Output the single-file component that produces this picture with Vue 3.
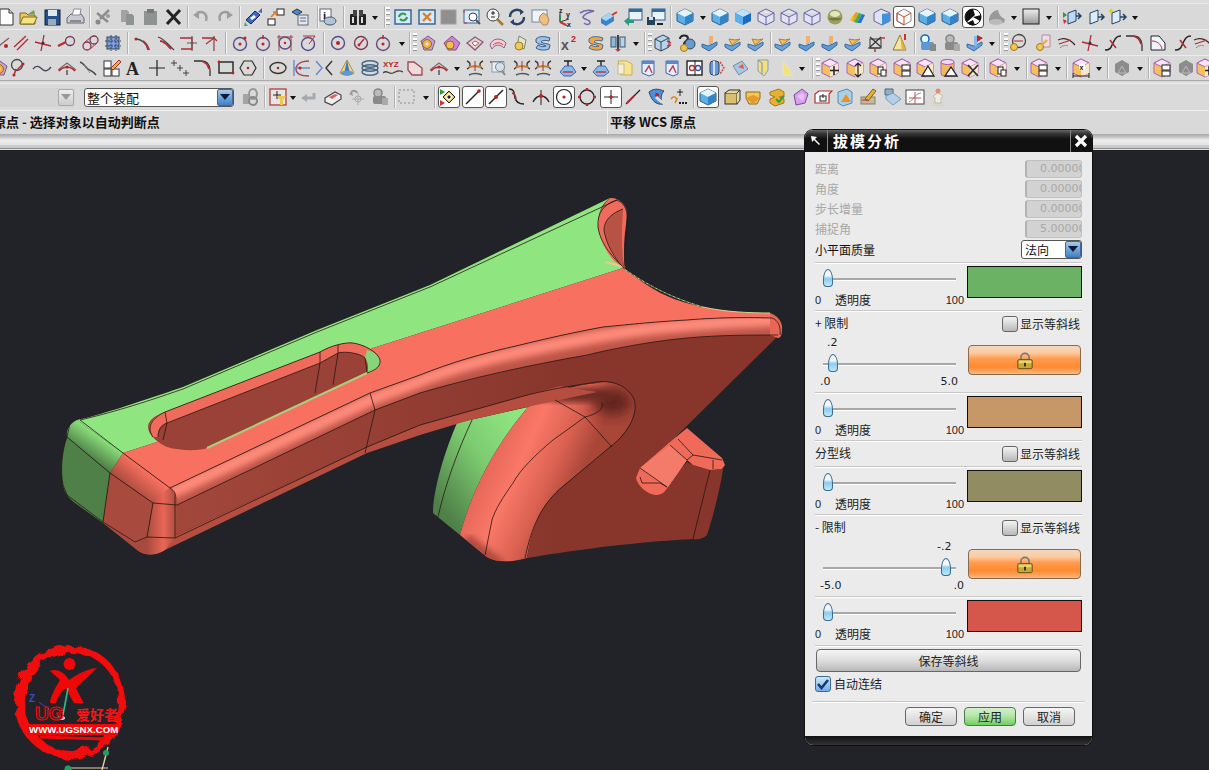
<script setup>
import { computed } from 'vue'

const toolRows = [
  [[6,'new'],[28,'open'],[52,'save'],[75,'print'],[90,'sep'],[103,'cut'],[127,'copy'],[150,'paste'],[173,'del'],[188,'sep'],[201,'undo'],[225,'redo'],[240,'sep'],[254,'wcsedit'],[276,'layers'],[300,'props'],[318,'sep'],[328,'info'],[344,'sep'],[358,'binoc'],[375,'caret'],[385,'sep'],[388,'grip'],[403,'refresh'],[427,'fit'],[449,'graysq'],[472,'zoomwin'],[495,'zoom'],[517,'rotate'],[541,'pan'],[563,'axes'],[587,'curvep'],[609,'cubearrow'],[633,'winA'],[656,'winB'],[671,'sep'],[685,'cube'],[703,'caret'],[720,'cube'],[743,'cubeD'],[766,'wire'],[789,'wire'],[812,'wire'],[835,'sphere'],[858,'rainbow'],[882,'wirefill'],[904,'cubeO',1],[927,'cube'],[950,'cube'],[973,'discbw',1],[997,'grayshape'],[1014,'caret'],[1031,'gradsq'],[1049,'caret'],[1058,'sep'],[1072,'doorG'],[1096,'door'],[1118,'doorY'],[1135,'caret']],
  [[2,'lnX'],[21,'lnA'],[43,'lnB'],[67,'lnC'],[90,'lnD'],[113,'net'],[128,'sep'],[143,'arcA'],[166,'arcB'],[188,'trimA'],[210,'trimB'],[226,'sep'],[240,'cirA'],[263,'cirB'],[285,'cirC'],[308,'cirD'],[324,'sep'],[338,'cir1'],[361,'cir2'],[383,'cirB'],[402,'caret'],[410,'sep'],[415,'grip'],[428,'gearO'],[452,'gearP'],[475,'surfA'],[498,'surfB'],[521,'gearY'],[543,'surfy'],[559,'sep'],[570,'x2'],[596,'surfyO'],[618,'pin'],[636,'caret'],[645,'sep'],[650,'grip'],[663,'cubeRed'],[687,'gearQ'],[710,'basin'],[733,'basinO'],[756,'basinO'],[771,'sep'],[783,'basinO'],[807,'basin'],[830,'basin'],[853,'basinO'],[876,'xbox'],[900,'bell'],[915,'sep'],[928,'blueK'],[952,'grayK'],[975,'basinR'],[992,'caret'],[1000,'sep'],[1006,'grip'],[1018,'gearL'],[1043,'keyDoc'],[1067,'arcThin'],[1090,'lnB'],[1113,'sCurve'],[1135,'trimC'],[1158,'docArc'],[1183,'sCurve'],[1203,'arcThin']],
  [[0,'gearO'],[18,'pinC'],[42,'wave'],[67,'spline'],[88,'spline2'],[112,'gridPen'],[133,'textA'],[157,'plus'],[180,'plusses'],[203,'trimC'],[226,'rect'],[248,'hex'],[264,'sep'],[278,'ellipse'],[302,'para'],[324,'hyper'],[347,'cone'],[370,'coil'],[393,'xyz'],[415,'house'],[439,'spline'],[457,'caret'],[475,'ss1'],[498,'ss2'],[522,'ss1'],[543,'ss1'],[568,'plate'],[584,'caret'],[601,'plate'],[625,'folderY'],[648,'sheetB'],[672,'sheetB'],[695,'mirror'],[717,'cylArrow'],[740,'tiltSq'],[763,'flagY'],[787,'wedgeY'],[802,'caret'],[813,'sep'],[818,'grip'],[830,'cpPlus'],[855,'cpArrow'],[878,'cpDoc'],[902,'cpGrid'],[925,'cpTri'],[948,'cylTri'],[970,'cpX'],[985,'sep'],[998,'cpDoc'],[1017,'caret'],[1027,'sep'],[1039,'cpGrid'],[1058,'caret'],[1067,'sep'],[1081,'cpDim'],[1099,'caret'],[1108,'sep'],[1122,'grayHex'],[1140,'caret'],[1149,'sep'],[1162,'cpGrid'],[1186,'grayHex'],[1205,'cpPlus']],
  [[37,'combo1'],[159,'combo2'],[250,'grayLink'],[265,'sep'],[278,'filter'],[293,'caret'],[308,'grayArrow'],[333,'box3d'],[357,'grayCross'],[380,'grayK'],[395,'sep'],[407,'dashRect'],[426,'caret'],[435,'sep'],[449,'snapGrid',1],[473,'snapLine',1],[496,'snapMid',1],[517,'snapCurve'],[541,'snapT'],[564,'snapCenter',1],[587,'snapQuad'],[611,'snapPlus',1],[633,'snapPt'],[656,'snapSurf'],[679,'snapMore'],[694,'sep'],[708,'cube',1],[732,'boxY'],[753,'boxO'],[777,'boxG'],[800,'boxV'],[823,'frameR'],[845,'cubeOr'],[868,'pencilBox'],[892,'flagB'],[915,'chart'],[938,'manG']],
]

const widths = { sep: 2, caret: 8, grip: 4, combo1: 76, combo2: 150 }

// every item sits at the centre x read off the toolbar
const rows = computed(() => toolRows.map((row) => {
  let right = 0
  return row.map(([x, kind, active]) => {
    const w = widths[kind] || 22
    const item = { kind, active, w, ml: x - w / 2 - right }
    right = x + w / 2
    return item
  })
}))

const fields = [
  { label: '距离', value: '0.00000' },
  { label: '角度', value: '0.00000' },
  { label: '步长增量', value: '0.00000' },
  { label: '捕捉角', value: '5.00000' },
]
</script>

<template>
  <div class="page">
    <svg class="defs" width="0" height="0">
      <defs>
        <linearGradient id="gSteel" x1="0" y1="0" x2="0" y2="1"><stop offset="0" stop-color="#eee"/><stop offset="1" stop-color="#999"/></linearGradient>
        <linearGradient id="gGreenBody" x1="1" y1="0" x2="0" y2="1"><stop offset="0.1" stop-color="#8fe680"/><stop offset="0.45" stop-color="#7ccb70"/><stop offset="0.85" stop-color="#4f8048"/></linearGradient>
        <linearGradient id="gRedBody" gradientUnits="userSpaceOnUse" x1="470" y1="455" x2="570" y2="500"><stop offset="0" stop-color="#d85d4f"/><stop offset="0.45" stop-color="#fa7868"/><stop offset="0.75" stop-color="#d96050"/><stop offset="1" stop-color="#a84638"/></linearGradient>
        <linearGradient id="gFace" gradientUnits="userSpaceOnUse" x1="170" y1="0" x2="560" y2="0"><stop offset="0" stop-color="#a3473b"/><stop offset="0.6" stop-color="#943e33"/><stop offset="1" stop-color="#88362c"/></linearGradient>
        <linearGradient id="gEndGreen" gradientUnits="userSpaceOnUse" x1="102" y1="436" x2="88" y2="456"><stop offset="0" stop-color="#8fe680"/><stop offset="1" stop-color="#4f8048"/></linearGradient>
        <linearGradient id="gEndRed" gradientUnits="userSpaceOnUse" x1="146" y1="471" x2="130" y2="490"><stop offset="0" stop-color="#f87060"/><stop offset="1" stop-color="#a84b3e"/></linearGradient>
        <linearGradient id="gCorner" gradientUnits="userSpaceOnUse" x1="147" y1="0" x2="177" y2="0"><stop offset="0" stop-color="#a84b3e"/><stop offset="0.55" stop-color="#e86656"/><stop offset="1" stop-color="#a84b3e"/></linearGradient>

        <symbol id="new" viewBox="0 0 20 20"><path d="M4 2h9l4 4v12H4z" fill="#fff" stroke="#333"/><path d="M13 2v4h4" fill="#cde" stroke="#333"/></symbol>
        <symbol id="open" viewBox="0 0 20 20"><path d="M2 6h6l2 2h7v9H2z" fill="#e8c85a" stroke="#7a6a20"/><path d="M2 17l3-7h14l-3 7z" fill="#f6e27e" stroke="#7a6a20"/><path d="M10 7l6-4 1 4z" fill="#5cb04a"/></symbol>
        <symbol id="save" viewBox="0 0 20 20"><rect x="3" y="3" width="15" height="15" fill="#24508c" stroke="#123"/><rect x="6" y="3" width="9" height="6" fill="#dfe8f0"/><rect x="6" y="12" width="8" height="6" fill="#9ab"/></symbol>
        <symbol id="print" viewBox="0 0 20 20"><path d="M2 11l4-4h10l3 4v5H2z" fill="#c8ccd0" stroke="#667"/><path d="M7 8l2-6h7l-1 6z" fill="#fff" stroke="#889"/><rect x="5" y="13" width="11" height="2" fill="#889"/></symbol>
        <symbol id="cut" viewBox="0 0 20 20"><path d="M16 3L7 12M4 6l11 9" stroke="#8a8e8c" stroke-width="2.500" fill="none"/><circle cx="5" cy="15" r="2.500" fill="#888"/><circle cx="15" cy="9" r="2" fill="#999"/></symbol>
        <symbol id="copy" viewBox="0 0 20 20"><path d="M4 3h6l2 2v10H4z" fill="#a0a4a2"/><path d="M9 7h6l2 2v9H9z" fill="#8e9290"/></symbol>
        <symbol id="paste" viewBox="0 0 20 20"><rect x="4" y="4" width="13" height="14" fill="#8e9290"/><rect x="7" y="2" width="7" height="4" fill="#777"/></symbol>
        <symbol id="del" viewBox="0 0 20 20"><path d="M4 3l13 14M17 3L4 17" stroke="#222" stroke-width="3" fill="none"/></symbol>
        <symbol id="undo" viewBox="0 0 20 20"><path d="M6 6c6-3 11 1 9 8" stroke="#9a9e9c" stroke-width="2.500" fill="none"/><path d="M2 8l6-4v8z" fill="#9a9e9c"/></symbol>
        <symbol id="redo" viewBox="0 0 20 20"><path d="M14 6C8 3 3 7 5 14" stroke="#9a9e9c" stroke-width="2.500" fill="none"/><path d="M18 8l-6-4v8z" fill="#9a9e9c"/></symbol>
        <symbol id="wcsedit" viewBox="0 0 20 20"><path d="M2 13l9-9 5 4-9 9z" fill="#3a6cc4" stroke="#224"/><path d="M6 11l4-3 2 2-4 3z" fill="#fff"/><path d="M14 5l4-4v5z" fill="#3a6cc4"/><path d="M1 15l3 4-4 0z" fill="#4a7"/></symbol>
        <symbol id="layers" viewBox="0 0 20 20"><rect x="11" y="2" width="7" height="6" fill="#fff" stroke="#222"/><rect x="2" y="12" width="7" height="6" fill="#fff" stroke="#222"/><path d="M5 10l4-4M7 5h3v3" stroke="#e07a20" stroke-width="1.600" fill="none"/></symbol>
        <symbol id="props" viewBox="0 0 20 20"><path d="M2 5l5-3 5 3-5 3z" fill="#4a8ad0" stroke="#333"/><rect x="8" y="8" width="10" height="10" fill="#dfe8f0" stroke="#667"/><path d="M10 11h6M10 14h6" stroke="#667"/></symbol>
        <symbol id="info" viewBox="0 0 20 20"><rect x="2" y="2" width="11" height="12" fill="#fff" stroke="#667"/><text x="5" y="12" font-size="11" font-weight="700" fill="#114" font-family="Liberation Serif">i</text><ellipse cx="12" cy="14" rx="6" ry="4" fill="#b4c4d8" stroke="#456"/></symbol>
        <symbol id="binoc" viewBox="0 0 20 20"><rect x="2" y="7" width="7" height="11" rx="1" fill="#222"/><rect x="11" y="7" width="7" height="11" rx="1" fill="#222"/><rect x="5" y="3" width="4" height="6" fill="#444"/><rect x="11" y="3" width="4" height="6" fill="#444"/><rect x="4" y="10" width="2" height="6" fill="#ddd"/><rect x="13" y="10" width="2" height="6" fill="#ddd"/></symbol>
        <symbol id="refresh" viewBox="0 0 20 20"><rect x="2" y="3" width="16" height="14" fill="#d8e8f4" stroke="#34689c" stroke-width="1.500"/><path d="M6 10a4 4 0 0 1 7-2M14 10a4 4 0 0 1-7 2" stroke="#2c9a50" stroke-width="2" fill="none"/></symbol>
        <symbol id="fit" viewBox="0 0 20 20"><rect x="2" y="3" width="16" height="14" fill="#d8e8f4" stroke="#34689c" stroke-width="1.500"/><path d="M6 6l8 8M14 6l-8 8" stroke="#d88030" stroke-width="2.400"/></symbol>
        <symbol id="graysq" viewBox="0 0 20 20"><rect x="2" y="3" width="15" height="14" fill="#8f8f8f" stroke="#a0a0a0"/></symbol>
        <symbol id="zoomwin" viewBox="0 0 20 20"><rect x="2" y="3" width="15" height="13" fill="#dfeaf4" stroke="#34689c"/><circle cx="11" cy="10" r="4" fill="#fff" stroke="#345"/><path d="M14 13l4 4" stroke="#555" stroke-width="2"/><path d="M2 16h3M2 3v3" stroke="#c33"/></symbol>
        <symbol id="zoom" viewBox="0 0 20 20"><circle cx="8" cy="8" r="6" fill="#f0f4f8" stroke="#444"/><path d="M6 6h4M8 4v4M6 10h4" stroke="#222"/><path d="M12 12l6 6" stroke="#a87830" stroke-width="2.500"/></symbol>
        <symbol id="rotate" viewBox="0 0 20 20"><path d="M3 10a7 7 0 0 1 12-5M17 10a7 7 0 0 1-12 5" stroke="#2a4468" stroke-width="2.400" fill="none"/><path d="M13 2l4 3-4 3zM7 18l-4-3 4-3z" fill="#2a4468"/></symbol>
        <symbol id="pan" viewBox="0 0 20 20"><rect x="1" y="3" width="15" height="12" fill="#eef4fa" stroke="#789"/><path d="M9 9l3-3 4 2 2 5-2 5h-4l-4-5z" fill="#f0c080" stroke="#a86"/></symbol>
        <symbol id="axes" viewBox="0 0 20 20"><path d="M7 15V6M7 15l9-3M7 15l8 4" stroke="#333" fill="none"/><path d="M7 15V8" stroke="#2a9050" stroke-width="2"/><path d="M7 15l6 3" stroke="#c33" stroke-width="2"/><text x="6" y="6" font-size="7" font-weight="700" fill="#223" font-family="Liberation Sans">z</text><text x="13" y="10" font-size="7" font-weight="700" fill="#223" font-family="Liberation Sans">y</text><text x="14" y="20" font-size="7" font-weight="700" fill="#223" font-family="Liberation Sans">x</text></symbol>
        <symbol id="curvep" viewBox="0 0 20 20"><path d="M3 6c4-3 10-3 14-2-4 1-10 3-11 6 0 3 8 2 7 6-1 2-4 2-6 0" stroke="#7868a8" stroke-width="1.600" fill="none"/></symbol>
        <symbol id="cubearrow" viewBox="0 0 20 20"><path d="M2 11l8-5 5 3v5l-8 5-5-3z" fill="#3a84cc"/><path d="M2 11l8-5 5 3-8 5z" fill="#a8d4f0"/><path d="M13 8l5-3" stroke="#c33" stroke-width="2"/></symbol>
        <symbol id="winA" viewBox="0 0 20 20"><rect x="6" y="2" width="13" height="11" fill="#eaf2fa" stroke="#2c5c8c"/><rect x="6" y="2" width="13" height="3" fill="#2c6ca8"/><path d="M1 14l5-4v3h5v3H6v3z" fill="#2c9a80"/></symbol>
        <symbol id="winB" viewBox="0 0 20 20"><rect x="6" y="2" width="13" height="11" fill="#eaf2fa" stroke="#2c5c8c"/><rect x="6" y="2" width="13" height="3" fill="#2c6ca8"/><rect x="1" y="10" width="8" height="8" fill="#245" /><rect x="3" y="10" width="4" height="3" fill="#dde"/><path d="M11 17h6" stroke="#222" stroke-width="2"/></symbol>
        <symbol id="cube" viewBox="0 0 20 20"><path d="M10 2l8 4v8l-8 4-8-4V6z" fill="#5ab0e8" stroke="#345a80"/><path d="M2 6l8 4 8-4-8-4z" fill="#e4f4fc"/><path d="M10 10v8l8-4V6z" fill="#3484c8"/></symbol>
        <symbol id="cubeD" viewBox="0 0 20 20"><path d="M10 2l8 4v8l-8 4-8-4V6z" fill="#1a6cc0"/><path d="M2 6l8 4 8-4-8-4z" fill="#bfe2fa"/><path d="M10 10v8L2 14V6z" fill="#5ab0ec"/></symbol>
        <symbol id="wire" viewBox="0 0 20 20"><path d="M10 2l8 4v8l-8 4-8-4V6zM2 6l8 4 8-4M10 10v8" fill="#dfe4f4" stroke="#6a60a0"/></symbol>
        <symbol id="sphere" viewBox="0 0 20 20"><circle cx="10" cy="10" r="7.500" fill="#9aa060"/><ellipse cx="10" cy="7" rx="5" ry="3" fill="#e4e6c0"/><path d="M3 11a7.500 4 0 0 0 14 0" fill="#70783c"/></symbol>
        <symbol id="rainbow" viewBox="0 0 20 20"><path d="M2 13L8 5l3 1-5 9z" fill="#e8a020"/><path d="M6 15l5-9 3 1-5 9z" fill="#3cb050"/><path d="M9 16l5-9 3 1-4 8z" fill="#2c70d0"/><path d="M2 13l2-4 2 1-2 4z" fill="#e8d020"/></symbol>
        <symbol id="wirefill" viewBox="0 0 20 20"><path d="M9 2l9 4v8l-8 4-8-4V6z" fill="#dfe4f4" stroke="#6a60a0"/><path d="M10 7l8-1v8l-8 4z" fill="#3f92dc"/></symbol>
        <symbol id="cubeO" viewBox="0 0 20 20"><path d="M10 2l7 4v8l-7 4-7-4V6z" fill="#fbfbfb" stroke="#8a8a8a"/><path d="M3 6l7 4 7-4M10 10v8" stroke="#c0502c" fill="none"/><path d="M3 6v8l7 4" stroke="#c0502c" fill="none"/></symbol>
        <symbol id="discbw" viewBox="0 0 20 20"><circle cx="10" cy="10" r="8" fill="#fff" stroke="#111"/><path d="M10 2a8 8 0 0 0-6 13l8-7zM10 10l7 4a8 8 0 0 0 1-6z" fill="#111"/><path d="M4 16l6-3 2 5a8 8 0 0 1-8-2z" fill="#111"/></symbol>
        <symbol id="grayshape" viewBox="0 0 20 20"><path d="M2 14c0-7 5-11 9-11 1 4 2 7 7 9l-1 4H3z" fill="#999"/><ellipse cx="9" cy="15" rx="7" ry="3" fill="#bbb"/></symbol>
        <symbol id="gradsq" viewBox="0 0 20 20"><rect x="2" y="2" width="16" height="15" fill="url(#gSteel)" stroke="#222"/></symbol>
        <symbol id="doorG" viewBox="0 0 20 20"><path d="M6 6l8-3v11l-8 3z" fill="#bcd8f4" stroke="#246"/><path d="M14 9h5M16 6l3 3-3 3" stroke="#246" stroke-width="1.500" fill="none"/><path d="M1 5l4 3-4 3z" fill="#2a9a40"/><path d="M1 12l4 2-3 3z" fill="#c33"/></symbol>
        <symbol id="door" viewBox="0 0 20 20"><path d="M4 6l8-3v11l-8 3z" fill="#dcecfa" stroke="#246"/><path d="M12 10h6M15 7l3 3-3 3" stroke="#246" stroke-width="1.500" fill="none"/></symbol>
        <symbol id="doorY" viewBox="0 0 20 20"><path d="M4 6l8-3v11l-8 3z" fill="#dcecfa" stroke="#246"/><path d="M12 10h6M15 7l3 3-3 3" stroke="#246" stroke-width="1.500" fill="none"/><path d="M3 1l1 2 2 1-2 1-1 2-1-2-2-1 2-1z" fill="#d8d020"/></symbol>

        <symbol id="lnX" viewBox="0 0 20 20"><path d="M3 16L17 5" stroke="#8a5a70" stroke-width="1.400"/><circle cx="14" cy="13" r="2" fill="#b22"/></symbol>
        <symbol id="lnA" viewBox="0 0 20 20"><path d="M3 14L15 3M6 17L17 6" stroke="#b22a34" stroke-width="1.400"/></symbol>
        <symbol id="lnB" viewBox="0 0 20 20"><path d="M2 9l16 4M11 2L8 18" stroke="#b22a34" stroke-width="1.300"/><circle cx="10" cy="10" r="1.500" fill="#333"/></symbol>
        <symbol id="lnC" viewBox="0 0 20 20"><circle cx="13" cy="8" r="4.500" fill="none" stroke="#7a3a58" stroke-width="1.300"/><path d="M1 13l8-4" stroke="#b22a34" stroke-width="2"/></symbol>
        <symbol id="lnD" viewBox="0 0 20 20"><circle cx="7" cy="13" r="4" fill="none" stroke="#7a3a58" stroke-width="1.300"/><circle cx="14" cy="7" r="4" fill="none" stroke="#7a3a58" stroke-width="1.300"/><path d="M4 10l7-6M10 16l7-6" stroke="#b22a34"/></symbol>
        <symbol id="net" viewBox="0 0 20 20"><rect x="4" y="4" width="12" height="12" fill="#7c9ce0" stroke="#345"/><path d="M8 2v16M13 2v16M2 8h16M2 13h16" stroke="#345" stroke-dasharray="2 1"/></symbol>
        <symbol id="arcA" viewBox="0 0 20 20"><path d="M2 6c7 0 12 5 13 11" stroke="#444" stroke-width="1.300" fill="none"/><path d="M10 8c3 2 5 6 6 9" stroke="#b22a34" stroke-width="2" fill="none"/><circle cx="3" cy="6" r="1.500" fill="#b22"/></symbol>
        <symbol id="arcB" viewBox="0 0 20 20"><path d="M2 4c7 2 10 8 16 13" stroke="#444" stroke-width="1.300" fill="none"/><path d="M4 8c5 0 8 5 11 8" stroke="#b22a34" stroke-width="2" fill="none"/></symbol>
        <symbol id="trimA" viewBox="0 0 20 20"><path d="M2 5h12v11H3" stroke="#b22a34" stroke-width="1.300" fill="none"/><path d="M9 10h10M14 3v15" stroke="#555"/></symbol>
        <symbol id="trimB" viewBox="0 0 20 20"><path d="M2 5h12l3 3" stroke="#b22a34" stroke-width="1.300" fill="none"/><path d="M14 3v15M6 11l8-6" stroke="#8a4040" stroke-width="1.200"/></symbol>
        <symbol id="cirA" viewBox="0 0 20 20"><circle cx="10" cy="11" r="6.500" fill="none" stroke="#5a4a8a" stroke-width="1.400"/><circle cx="10" cy="11" r="1.500" fill="#b22"/><circle cx="15" cy="5" r="1.500" fill="#b22"/></symbol>
        <symbol id="cirB" viewBox="0 0 20 20"><circle cx="10" cy="11" r="6.500" fill="none" stroke="#6a4a7a" stroke-width="1.400"/><circle cx="10" cy="11" r="1.500" fill="#b22"/><path d="M10 2v4" stroke="#b22" stroke-width="1.400"/></symbol>
        <symbol id="cirC" viewBox="0 0 20 20"><circle cx="10" cy="10" r="6" fill="none" stroke="#5a4a8a" stroke-width="1.400"/><path d="M2 4h16M4 2v16M16 2v16" stroke="#a04040"/><circle cx="10" cy="10" r="1.200" fill="#b22"/></symbol>
        <symbol id="cirD" viewBox="0 0 20 20"><circle cx="10" cy="11" r="6.500" fill="none" stroke="#5a4a8a" stroke-width="1.400"/><path d="M5 3h12l-6 8" stroke="#b22a34" fill="none"/></symbol>
        <symbol id="cir1" viewBox="0 0 20 20"><circle cx="10" cy="10" r="6.500" fill="none" stroke="#5a4a8a" stroke-width="1.400"/><circle cx="10" cy="10" r="2" fill="#b22"/></symbol>
        <symbol id="cir2" viewBox="0 0 20 20"><circle cx="10" cy="10" r="6.500" fill="none" stroke="#7a3a58" stroke-width="1.400"/><path d="M8 12l5-6" stroke="#b22a34" stroke-width="1.400"/><circle cx="8" cy="12" r="1.400" fill="#b22"/></symbol>
        <symbol id="gearO" viewBox="0 0 20 20"><path d="M3 8l7-5 7 5-3 9H6z" fill="#c8a0d8" stroke="#7a5a8a"/><circle cx="9" cy="11" r="4.500" fill="#f0b040" stroke="#a06a10"/><circle cx="9" cy="11" r="1.500" fill="#fff"/></symbol>
        <symbol id="gearP" viewBox="0 0 20 20"><path d="M2 10l8-7 8 7-4 7H6z" fill="#d080d8" stroke="#804a90"/><circle cx="8" cy="12" r="4" fill="#f2c050" stroke="#a06a10"/></symbol>
        <symbol id="surfA" viewBox="0 0 20 20"><path d="M2 10l8-6 8 5-8 8z" fill="#f0d0d0" stroke="#8a5a80" stroke-width="1.300"/><path d="M7 10l3-2 4 2-4 3z" fill="#fff" stroke="#b06060"/></symbol>
        <symbol id="surfB" viewBox="0 0 20 20"><path d="M2 12c2-7 11-8 16-2l-2 5c-4-4-9-4-12 1z" fill="#f4d0d8" stroke="#8a6090"/><path d="M5 12c3-3 8-3 10 0" stroke="#c04040" fill="none"/></symbol>
        <symbol id="gearY" viewBox="0 0 20 20"><path d="M8 3l7 4-2 9-7-2z" fill="#e0e8c8" stroke="#7a8a6a"/><circle cx="8" cy="13" r="4" fill="#f0c860" stroke="#a07a20"/></symbol>
        <symbol id="surfy" viewBox="0 0 20 20"><path d="M3 6c3-3 8-3 14-1l-1 3c-4-1-7-1-8 1 2 2 7 1 9 3l-1 4c-5 2-10 1-13-1l2-3c3 2 6 2 8 1-3-2-8-1-10-4z" fill="#9cc4e8" stroke="#3a5a8a"/></symbol>
        <symbol id="x2" viewBox="0 0 20 20"><text x="1" y="17" font-size="14" font-weight="700" fill="#555" font-family="Liberation Sans">x</text><text x="11" y="9" font-size="9" font-weight="700" fill="#b22" font-family="Liberation Sans">2</text></symbol>
        <symbol id="surfyO" viewBox="0 0 20 20"><path d="M3 6c3-3 8-3 14-1l-1 3c-4-1-7-1-8 1 2 2 7 1 9 3l-1 4c-5 2-10 1-13-1l2-3c3 2 6 2 8 1-3-2-8-1-10-4z" fill="#f0a840" stroke="#4a6a9a"/></symbol>
        <symbol id="pin" viewBox="0 0 20 20"><rect x="3" y="4" width="5" height="10" fill="#8cb8e0" stroke="#456"/><rect x="12" y="4" width="5" height="10" fill="#b8d4ec" stroke="#456"/><path d="M10 2v16" stroke="#345" stroke-width="2"/><path d="M7 16l3 3 3-3z" fill="#c33"/></symbol>
        <symbol id="cubeRed" viewBox="0 0 20 20"><path d="M2 6l8-4 6 3v9l-8 4-6-3z" fill="#b8d4ec" stroke="#345"/><path d="M2 6l6 3 8-4M8 9v9" stroke="#345" fill="none"/><path d="M14 8l4 2M14 13l4-1" stroke="#c33" stroke-width="1.500"/></symbol>
        <symbol id="gearQ" viewBox="0 0 20 20"><path d="M3 6c0-4 7-5 8-1 0 3-4 3-4 6" stroke="#223" stroke-width="2" fill="none"/><circle cx="13" cy="11" r="5" fill="#6a9ad0" stroke="#345"/><circle cx="7" cy="15" r="3.500" fill="#f0c050" stroke="#a07a20"/></symbol>
        <symbol id="basin" viewBox="0 0 20 20"><path d="M2 11l6 2 9-4v3l-8 6-7-4z" fill="#5a9ade" stroke="#3a6a9a"/><rect x="9" y="3" width="4" height="8" fill="#f0b070"/></symbol>
        <symbol id="basinO" viewBox="0 0 20 20"><path d="M2 11l7 2 8-4v3l-8 6-7-4z" fill="#6aa4e0" stroke="#3a6a9a"/><path d="M6 6l3 6 8-6-5 1z" fill="#f0c060" stroke="#b08030"/></symbol>
        <symbol id="basinR" viewBox="0 0 20 20"><path d="M2 11l7 2 8-4v3l-8 6-7-4z" fill="#6aa4e0" stroke="#3a6a9a"/><rect x="9" y="3" width="3" height="10" fill="#8ab8e8"/><path d="M12 2l6 3-6 4z" fill="#c2202c"/></symbol>
        <symbol id="xbox" viewBox="0 0 20 20"><path d="M4 4l11 10M15 4L4 14M2 15h12" stroke="#333" stroke-width="1.200" fill="none"/><rect x="4" y="6" width="11" height="9" fill="none" stroke="#333"/><path d="M15 5h4M9 16v3" stroke="#c33" stroke-width="1.600"/></symbol>
        <symbol id="bell" viewBox="0 0 20 20"><path d="M10 2L3 17h13z" fill="#f4e4a0" stroke="#8a7a30"/><path d="M10 2l2 15h4z" fill="#e0b040"/><rect x="14" y="1" width="2" height="6" fill="#c33"/></symbol>
        <symbol id="blueK" viewBox="0 0 20 20"><circle cx="7" cy="6" r="4" fill="#dff" stroke="#246aa8" stroke-width="1.600"/><rect x="3" y="9" width="13" height="8" rx="2" fill="#5a98d8"/><rect x="12" y="11" width="6" height="7" fill="#888"/></symbol>
        <symbol id="grayK" viewBox="0 0 20 20"><circle cx="8" cy="6" r="4" fill="#bbb" stroke="#888" stroke-width="1.600"/><rect x="3" y="9" width="13" height="8" rx="2" fill="#8a8a8a"/><rect x="12" y="11" width="6" height="7" fill="#aaa"/></symbol>
        <symbol id="gearL" viewBox="0 0 20 20"><circle cx="11" cy="8" r="6.500" fill="none" stroke="#444" stroke-width="1.300"/><path d="M6 8h9" stroke="#b22"/><circle cx="6" cy="14" r="3.500" fill="#f2c850" stroke="#a07a20"/></symbol>
        <symbol id="keyDoc" viewBox="0 0 20 20"><path d="M9 2h8v12H9z" fill="#f0dce4" stroke="#b08aa0"/><circle cx="7" cy="14" r="3.500" fill="#f2c850" stroke="#a07a20"/><path d="M9 12l5-5" stroke="#e0b040" stroke-width="2.400"/></symbol>
        <symbol id="arcThin" viewBox="0 0 20 20"><path d="M1 7c6-3 12-1 17 5" stroke="#3a2a2a" stroke-width="1.200" fill="none"/><path d="M2 11l12-4" stroke="#b22a34" stroke-width="1.300"/><path d="M3 15c3-3 6-3 8-2" stroke="#888" fill="none"/></symbol>
        <symbol id="sCurve" viewBox="0 0 20 20"><path d="M2 17c6 0 6-3 8-7s3-7 8-7" stroke="#222" stroke-width="1.500" fill="none"/><path d="M7 7l6 8" stroke="#b22a34" stroke-width="1.600"/></symbol>
        <symbol id="trimC" viewBox="0 0 20 20"><path d="M1 3h7c6 0 9 4 9 9v6" stroke="#333" stroke-width="1.300" fill="none"/><path d="M8 3c4 1 7 4 8 8" stroke="#b22a34" stroke-width="1.600" fill="none"/></symbol>
        <symbol id="docArc" viewBox="0 0 20 20"><path d="M3 3h8l6 7v7H3z" fill="#eef4fa" stroke="#223"/><path d="M4 8c5 0 9 3 10 8" stroke="#b22a34" fill="none"/></symbol>
        <symbol id="pinC" viewBox="0 0 20 20"><circle cx="9" cy="7" r="5.500" fill="none" stroke="#444" stroke-width="1.300"/><path d="M8 11l-2 6M9 12l6-6" stroke="#b22a34" stroke-width="1.500"/><circle cx="6" cy="17" r="1.500" fill="#b22"/><circle cx="15" cy="6" r="1.500" fill="#b22"/></symbol>
        <symbol id="wave" viewBox="0 0 20 20"><path d="M1 11c3-4 6-3 9 0s6 2 9-2" stroke="#445" stroke-width="1.300" fill="none"/></symbol>
        <symbol id="spline" viewBox="0 0 20 20"><path d="M1 12l9-7 9 7" stroke="#7a6a6a" fill="none" stroke-width="1.200"/><path d="M2 13c4-5 12-5 16 0" stroke="#b22a34" stroke-width="1.600" fill="none"/><circle cx="10" cy="9" r="1.600" fill="#b22"/><path d="M10 12v5" stroke="#777" stroke-width="2"/></symbol>
        <symbol id="spline2" viewBox="0 0 20 20"><path d="M2 4c4 1 5 5 8 7s5 2 8 6" stroke="#444" stroke-width="1.500" fill="none"/><path d="M6 7l6 8" stroke="#888"/></symbol>
        <symbol id="gridPen" viewBox="0 0 20 20"><rect x="2" y="3" width="7" height="7" fill="#fff" stroke="#333"/><rect x="2" y="11" width="7" height="7" fill="#fff" stroke="#333"/><rect x="10" y="11" width="7" height="7" fill="#fff" stroke="#333"/><path d="M9 10l8-8 2 2-8 8z" fill="#f0b030" stroke="#a03030"/></symbol>
        <symbol id="textA" viewBox="0 0 20 20"><text x="3" y="17" font-size="18" font-weight="700" fill="#222" font-family="Liberation Serif">A</text></symbol>
        <symbol id="plus" viewBox="0 0 20 20"><path d="M10 2v16M2 10h16" stroke="#222" stroke-width="1.200"/></symbol>
        <symbol id="plusses" viewBox="0 0 20 20"><path d="M4 2v6M1 5h6M10 7v6M7 10h6M16 12v6M13 15h6" stroke="#444"/></symbol>
        <symbol id="rect" viewBox="0 0 20 20"><rect x="3" y="4" width="14" height="11" fill="none" stroke="#222" stroke-width="1.400"/><circle cx="3" cy="4" r="1.400" fill="#b22"/><circle cx="17" cy="15" r="1.400" fill="#b22"/></symbol>
        <symbol id="hex" viewBox="0 0 20 20"><path d="M6 3h8l4 7-4 7H6l-4-7z" fill="none" stroke="#333" stroke-width="1.200"/><circle cx="10" cy="10" r="1.300" fill="#b22"/></symbol>
        <symbol id="ellipse" viewBox="0 0 20 20"><ellipse cx="10" cy="10" rx="8" ry="5.500" fill="none" stroke="#333" stroke-width="1.300"/><circle cx="10" cy="10" r="1.300" fill="#b22"/></symbol>
        <symbol id="para" viewBox="0 0 20 20"><path d="M17 3C8 3 4 7 4 11s4 7 13 7" fill="none" stroke="#a04a5a" stroke-width="1.400"/><path d="M2 2v16M2 10h16" stroke="#6a8ac8" stroke-width="1.400"/><circle cx="8" cy="10" r="1.500" fill="#b22"/></symbol>
        <symbol id="hyper" viewBox="0 0 20 20"><path d="M2 3l6 7-6 7" stroke="#6a8ac8" stroke-width="1.500" fill="none"/><path d="M18 3l-6 7 6 7" stroke="#333" stroke-width="1.400" fill="none"/></symbol>
        <symbol id="cone" viewBox="0 0 20 20"><path d="M10 2L3 15c3 3 11 3 14 0z" fill="#f0d880" stroke="#b09040"/><path d="M10 2l-3 14 6 0z" fill="#3a7ac8"/><ellipse cx="10" cy="15" rx="6" ry="2.500" fill="#5a9ad8"/></symbol>
        <symbol id="coil" viewBox="0 0 20 20"><ellipse cx="10" cy="6" rx="8" ry="3.200" fill="none" stroke="#456a88" stroke-width="1.500"/><ellipse cx="10" cy="10" rx="8" ry="3.200" fill="none" stroke="#456a88" stroke-width="1.500"/><ellipse cx="10" cy="14" rx="8" ry="3.200" fill="none" stroke="#456a88" stroke-width="1.500"/></symbol>
        <symbol id="xyz" viewBox="0 0 20 20"><text x="0" y="9" font-size="8" font-weight="700" fill="#b22" font-family="Liberation Sans">XYZ</text><path d="M0 15c4-4 6 2 10 0s6-3 10-1" stroke="#444" fill="none" stroke-width="1.300"/></symbol>
        <symbol id="house" viewBox="0 0 20 20"><path d="M3 4h6l8 6v7H7l-4-5z" fill="#f0dada" stroke="#a04a5a" stroke-width="1.400"/></symbol>
        <symbol id="ss1" viewBox="0 0 20 20"><path d="M2 3c5 2 3 7 0 8M18 3c-5 2-3 7 0 8" stroke="#4a3a3a" stroke-width="1.400" fill="none"/><path d="M4 9c4-1 8-1 12 0" stroke="#c08030" stroke-width="2" fill="none"/><path d="M4 17c4-2 8-2 13 0" stroke="#4a5a6a" stroke-width="1.400" fill="none"/><path d="M10 3v10" stroke="#a03030"/></symbol>
        <symbol id="ss2" viewBox="0 0 20 20"><path d="M2 4h14" stroke="#7a3a4a" stroke-width="1.400"/><rect x="4" y="4" width="12" height="10" fill="#e8eef4" stroke="#8a9ab0"/><circle cx="12" cy="9" r="4.500" fill="#d4e0e8" stroke="#789"/><path d="M14 13l3 4" stroke="#888" stroke-width="2"/></symbol>
        <symbol id="plate" viewBox="0 0 20 20"><path d="M6 3h8M10 3v7" stroke="#222" stroke-width="1.400"/><path d="M2 14l5-6h7l4 6-5 4H6z" fill="#8ab8ea" stroke="#3a68a8"/><path d="M5 14h10" stroke="#c03030" stroke-width="1.400"/></symbol>
        <symbol id="folderY" viewBox="0 0 20 20"><path d="M3 3h9l5 3v11H6z" fill="#f8e490" stroke="#c8b050"/><rect x="3" y="6" width="6" height="10" fill="#f4f0d8" stroke="#c8b890"/></symbol>
        <symbol id="sheetB" viewBox="0 0 20 20"><path d="M4 3h12v13l-5 2-7-3z" fill="#e4eefa" stroke="#3a68a8"/><path d="M4 3h12v3H4z" fill="#5a88c8"/><path d="M7 14l4-6 3 7" stroke="#c04050" fill="none" stroke-width="1.400"/></symbol>
        <symbol id="mirror" viewBox="0 0 20 20"><rect x="2" y="3" width="15" height="14" fill="#fff" stroke="#222" stroke-width="1.400"/><path d="M10 2v16" stroke="#222"/><circle cx="7" cy="10" r="2.500" fill="none" stroke="#b22a34" stroke-width="1.300"/><circle cx="13" cy="10" r="2.500" fill="none" stroke="#3a4aa8" stroke-width="1.300"/></symbol>
        <symbol id="cylArrow" viewBox="0 0 20 20"><rect x="3" y="3" width="9" height="14" rx="3" fill="#6a98d8" stroke="#345"/><rect x="6" y="3" width="2" height="14" fill="#cde"/><path d="M13 4l4 6-4 6" stroke="#d04030" stroke-width="1.400" fill="none" stroke-dasharray="2 1"/></symbol>
        <symbol id="tiltSq" viewBox="0 0 20 20"><path d="M3 8l9-5 6 8-9 6z" fill="#a8c8e8" stroke="#7a8aa0"/><path d="M8 9l5-3 1 5z" fill="#e06040"/></symbol>
        <symbol id="flagY" viewBox="0 0 20 20"><path d="M5 2h10v10l-4 6-6-5z" fill="#f4de80" stroke="#88a0b0"/><path d="M5 2l4 3v11" stroke="#6a90b0" fill="none"/></symbol>
        <symbol id="wedgeY" viewBox="0 0 20 20"><path d="M6 3l10 14H6z" fill="#f6e070" stroke="#e8e4c8"/></symbol>
        <symbol id="cpBase" viewBox="0 0 20 20"><path d="M10 1l8 4v10l-8 4-8-4V5z" fill="#f4c060" stroke="#b060b8"/><path d="M2 5l8 4 8-4-8-4z" fill="#f8e4f4" stroke="#a860b0"/><path d="M10 9v10l8-4V5z" fill="#f8e8c8"/></symbol>
        <symbol id="cpPlus" viewBox="0 0 20 20"><use href="#cpBase"/><path d="M14 8v9M10 12.500h9" stroke="#222" stroke-width="1.500"/></symbol>
        <symbol id="cpArrow" viewBox="0 0 20 20"><use href="#cpBase"/><path d="M13 5v14M10 8l3-3 3 3M10 16l3 3 3-3" stroke="#222" stroke-width="1.200" fill="none"/></symbol>
        <symbol id="cpDoc" viewBox="0 0 20 20"><use href="#cpBase"/><rect x="10" y="9" width="5" height="7" fill="#fff" stroke="#222"/><rect x="13" y="12" width="5" height="6" fill="#fff" stroke="#222"/></symbol>
        <symbol id="cpGrid" viewBox="0 0 20 20"><use href="#cpBase"/><rect x="10" y="7" width="8" height="5" fill="#fff" stroke="#222"/><rect x="10" y="13" width="8" height="5" fill="#fff" stroke="#222"/></symbol>
        <symbol id="cpTri" viewBox="0 0 20 20"><use href="#cpBase"/><path d="M13 8l6 10H7z" fill="#fff" stroke="#222" stroke-width="1.300"/></symbol>
        <symbol id="cylTri" viewBox="0 0 20 20"><rect x="3" y="2" width="13" height="16" rx="3" fill="#f2b860" stroke="#b060b8"/><ellipse cx="9.500" cy="4" rx="6.500" ry="2.500" fill="#f0d8f0" stroke="#a860b0"/><path d="M13 9l6 9H7z" fill="#fff" stroke="#222" stroke-width="1.300"/></symbol>
        <symbol id="cpX" viewBox="0 0 20 20"><use href="#cpBase"/><path d="M8 7l10 11M18 7L8 18" stroke="#333" stroke-width="1.800"/></symbol>
        <symbol id="cpDim" viewBox="0 0 20 20"><use href="#cpBase"/><path d="M2 18h16M2 15v5M18 15v5" stroke="#222"/><rect x="8" y="6" width="6" height="6" fill="#fff"/><text x="8.500" y="12" font-size="7" font-weight="700" fill="#222" font-family="Liberation Sans">x</text></symbol>
        <symbol id="grayHex" viewBox="0 0 20 20"><path d="M10 2l7 4v8l-7 4-7-4V6z" fill="#8c8c8c"/><path d="M10 8l4 7H6z" fill="none" stroke="#bbb"/></symbol>

        <symbol id="grayLink" viewBox="0 0 20 20"><rect x="3" y="7" width="7" height="10" fill="#a4a4a4"/><ellipse cx="13" cy="7" rx="4" ry="5" fill="none" stroke="#999" stroke-width="2"/><ellipse cx="13" cy="14" rx="4" ry="4" fill="none" stroke="#888" stroke-width="2"/></symbol>
        <symbol id="filter" viewBox="0 0 20 20"><rect x="2" y="2" width="16" height="16" fill="#e8e4e4" stroke="#b04040" stroke-width="1.300"/><path d="M5 8h8M9 4v8" stroke="#222"/><path d="M9 9h9l-3 4v5h-3v-5z" fill="#f0c848"/></symbol>
        <symbol id="grayArrow" viewBox="0 0 20 20"><path d="M16 6v5H8" stroke="#a4aab0" stroke-width="3" fill="none"/><path d="M3 11l6-4v8z" fill="#a4aab0"/></symbol>
        <symbol id="box3d" viewBox="0 0 20 20"><path d="M2 11l10-6 6 3v4l-9 6-7-3z" fill="#eee" stroke="#444" stroke-width="1.200"/><path d="M6 10l6-3 3 1-6 4z" fill="#e06060"/></symbol>
        <symbol id="grayCross" viewBox="0 0 20 20"><path d="M4 6c1-3 5-3 6 0" stroke="#999" stroke-width="2" fill="none"/><path d="M2 7l4 2-1-4z" fill="#999"/><circle cx="11" cy="12" r="3" fill="none" stroke="#aaa"/><path d="M11 6v12M5 12h12" stroke="#aaa"/></symbol>
        <symbol id="dashRect" viewBox="0 0 20 20"><rect x="2" y="3" width="15" height="13" fill="none" stroke="#8a8a8a" stroke-dasharray="2 2"/></symbol>
        <symbol id="snapGrid" viewBox="0 0 20 20"><path d="M10 4l6 6-6 6-6-6z" fill="#f0c030" stroke="#222"/><path d="M10 6l4 4-4 4-4-4z" fill="#fff"/><path d="M10 8l2 2-2 2-2-2z" fill="#222"/><path d="M1 2l5 3-5 3z" fill="#2a9a40"/><path d="M1 13l5 3-5 3z" fill="#c33"/></symbol>
        <symbol id="snapLine" viewBox="0 0 20 20"><path d="M3 17L16 4" stroke="#222" stroke-width="1.400"/><circle cx="16" cy="4" r="1.800" fill="#b22"/></symbol>
        <symbol id="snapMid" viewBox="0 0 20 20"><path d="M3 17L17 3" stroke="#222" stroke-width="1.400"/><circle cx="10" cy="10" r="2" fill="#b22"/></symbol>
        <symbol id="snapCurve" viewBox="0 0 20 20"><path d="M2 2c6 0 5 5 6 9s3 6 9 6" stroke="#222" stroke-width="1.400" fill="none"/><path d="M5 6c3 1 4 4 4 7" stroke="#b22a34" stroke-width="1.500" fill="none"/></symbol>
        <symbol id="snapT" viewBox="0 0 20 20"><path d="M2 15c2-4 5-6 8-6s6 2 8 6" stroke="#222" stroke-width="1.300" fill="none"/><path d="M10 3v15" stroke="#222"/><circle cx="10" cy="9" r="2" fill="#b22"/></symbol>
        <symbol id="snapCenter" viewBox="0 0 20 20"><circle cx="10" cy="10" r="7.500" fill="none" stroke="#222" stroke-width="1.200"/><circle cx="10" cy="10" r="1.600" fill="#b22"/></symbol>
        <symbol id="snapQuad" viewBox="0 0 20 20"><circle cx="10" cy="10" r="7" fill="none" stroke="#222" stroke-width="1.300"/><path d="M10 1v3M10 16v3M1 10h3M16 10h3" stroke="#b22a34" stroke-width="2.400"/></symbol>
        <symbol id="snapPlus" viewBox="0 0 20 20"><path d="M10 3v14M3 10h14" stroke="#222"/><path d="M8 10h4M10 8v4" stroke="#b22a34" stroke-width="1.500"/></symbol>
        <symbol id="snapPt" viewBox="0 0 20 20"><path d="M3 17L17 3" stroke="#222" stroke-width="1.300"/><path d="M4 16l7-7" stroke="#b22a34" stroke-width="2"/></symbol>
        <symbol id="snapSurf" viewBox="0 0 20 20"><path d="M3 5c6-5 12-2 15-1-3 3-4 8-1 13-6 1-11-2-14-12z" fill="#4a90dc" stroke="#345"/><circle cx="11" cy="8" r="2" fill="#b22"/><path d="M10 10c2 2 5 5 8 6" stroke="#ddd" stroke-width="3" fill="none"/></symbol>
        <symbol id="snapMore" viewBox="0 0 20 20"><path d="M11 2v7M8 5h6" stroke="#222"/><path d="M2 12c2-3 4-3 6 0l-2 4" stroke="#e08020" stroke-width="1.600" fill="none"/><path d="M10 16h2M13 16h2M16 16h2" stroke="#222" stroke-width="2"/></symbol>
        <symbol id="boxY" viewBox="0 0 20 20"><rect x="3" y="6" width="12" height="11" fill="#d8c070" stroke="#333"/><path d="M3 6l4-3h11l-3 3M15 6l3-3v10l-3 4" fill="#e8d8a0" stroke="#333"/></symbol>
        <symbol id="boxO" viewBox="0 0 20 20"><path d="M3 5h14v6l-3 6H6l-3-6z" fill="#f4c848" stroke="#8a6a30"/><path d="M3 11l7-3 7 3-7 6z" fill="#e89830"/></symbol>
        <symbol id="boxG" viewBox="0 0 20 20"><path d="M3 5l9-3 5 3v4l-5 1 5 2v4l-9 3-5-3v-4l5-2-5-2z" fill="#e8b030" stroke="#a87a20"/><path d="M9 12l3 3 5-6" stroke="#3a9a40" stroke-width="2" fill="none"/></symbol>
        <symbol id="boxV" viewBox="0 0 20 20"><path d="M4 8l8-6 6 5-3 9-9 2z" fill="#d8a0ec" stroke="#7a4a9a"/><path d="M7 9l5-3 3 3-3 5z" fill="#e8c0f4"/></symbol>
        <symbol id="frameR" viewBox="0 0 20 20"><path d="M2 7l4-3h13l-3 3v9H2z" fill="#fff" stroke="#b03030" stroke-width="1.200"/><rect x="7" y="9" width="6" height="5" fill="none" stroke="#222"/><path d="M10 7v4" stroke="#222"/></symbol>
        <symbol id="cubeOr" viewBox="0 0 20 20"><path d="M3 5l9-3 5 3v11l-9 3-5-3z" fill="#a8d0e8" stroke="#5a8aaa"/><path d="M6 15l5-8 5 8z" fill="#f09020"/></symbol>
        <symbol id="pencilBox" viewBox="0 0 20 20"><rect x="3" y="10" width="14" height="7" fill="#c0b8a0" stroke="#8a8060"/><path d="M7 12L15 2l3 2-8 10z" fill="#e8b030" stroke="#806020"/><path d="M4 13h6" stroke="#b03030"/></symbol>
        <symbol id="flagB" viewBox="0 0 20 20"><path d="M3 2h8v6H3z" fill="#8ab0d0" stroke="#567"/><path d="M4 9l7-3 8 6-8 6-7-6z" fill="#b4d0e8" stroke="#7a9ab0"/></symbol>
        <symbol id="chart" viewBox="0 0 20 20"><rect x="1" y="3" width="18" height="14" fill="#fff" stroke="#444"/><path d="M10 5v12M4 11h12" stroke="#c05050"/><path d="M4 15c4-1 5-8 12-9" stroke="#889" fill="none"/></symbol>
        <symbol id="manG" viewBox="0 0 20 20"><ellipse cx="10" cy="17" rx="8" ry="2.500" fill="#d8d8c8"/><circle cx="10" cy="4" r="2.500" fill="#e09070"/><path d="M5 9l5-3 5 3-2 2v5H7v-5z" fill="#f0ece0" stroke="#bbb"/></symbol>
        <symbol id="lockIcon" viewBox="0 0 20 20">
          <path d="M5.500 9V6a4.500 4.500 0 0 1 9 0v3" fill="none" stroke="#777" stroke-width="1.800"/>
          <rect x="2" y="8.500" width="16" height="10" rx="1.500" fill="#c8a838" stroke="#5a4a10"/>
          <rect x="3" y="9.500" width="14" height="3" fill="#e8d470"/>
          <rect x="9" y="12" width="2" height="4" fill="#222"/>
        </symbol>
      </defs>
    </svg>

    <header class="chrome">
      <div v-for="(row, r) in rows" :key="r" class="tool-row" :class="'row-' + r">
        <template v-for="(it, i) in row" :key="i">
          <span v-if="it.kind === 'sep'" class="sep" :style="{ marginLeft: it.ml + 'px' }"></span>
          <span v-else-if="it.kind === 'caret'" class="caret" :style="{ marginLeft: it.ml + 'px' }"></span>
          <span v-else-if="it.kind === 'grip'" class="grip" :style="{ marginLeft: it.ml + 'px' }"></span>
          <span v-else-if="it.kind === 'combo1'" class="combo combo-off" :style="{ marginLeft: it.ml + 'px' }"><i class="combo-arrow off"></i></span>
          <span v-else-if="it.kind === 'combo2'" class="combo" :style="{ marginLeft: it.ml + 'px' }">
            <b>整个装配</b><i class="combo-arrow"></i>
          </span>
          <span v-else class="tool" :class="{ active: it.active }" :style="{ marginLeft: it.ml + 'px' }">
            <svg width="20" height="20"><use :href="'#' + it.kind" /></svg>
          </span>
        </template>
      </div>
      <div class="status">
        <div class="status-left">原点 - 选择对象以自动判断点</div>
        <div class="status-right">平移 WCS 原点</div>
      </div>
      <div class="strip"></div>
    </header>

    <main class="viewport">
      <svg class="model" width="1209" height="620" viewBox="0 150 1209 620">
        <defs>
          <clipPath id="clipBand"><path d="M772,318 C740,317 710,318 687,320 C650,322 625,325 603,327 C570,333 545,339 520,345 C480,354 450,363 420,375 L370,393 L170,488 L177,505 L375,410 L420,393 C450,384 475,378 503,372 C530,365 560,360 587,355 C620,347 655,341 687,338 C720,335 750,335 778,335 L782,326 Z"/></clipPath>
          <clipPath id="clipBody"><path d="M528,407 C500,440 475,480 460,535 L487,557 C495,562 510,563 527,558 C533,520 545,500 567,483 L610,447 C630,432 640,410 633,397 C625,384 610,380 597,383 C575,385 550,392 528,407 Z"/></clipPath>
          <filter id="blur3" x="-20%" y="-20%" width="140%" height="140%"><feGaussianBlur stdDeviation="3"/></filter>
          <filter id="blur7" x="-40%" y="-40%" width="180%" height="180%"><feGaussianBlur stdDeviation="7"/></filter>
          <filter id="brush" x="-10%" y="-10%" width="120%" height="120%"><feTurbulence type="fractalNoise" baseFrequency="0.09" numOctaves="2" seed="4"/><feDisplacementMap in="SourceGraphic" scale="9"/></filter>
        </defs>

        <!-- lower body behind the arm -->
        <path d="M457,423 C445,450 433,490 433,513 L460,535 C475,480 500,440 528,407 L470,420 Z" fill="url(#gGreenBody)"/>
        <path d="M528,407 C500,440 475,480 460,535 L487,557 C495,562 510,563 527,558 C533,520 545,500 567,483 L610,447 C630,432 640,410 633,397 C625,384 610,380 597,383 C575,385 550,392 528,407 Z" fill="url(#gRedBody)"/>
        <g clip-path="url(#clipBody)">
          <ellipse cx="612" cy="402" rx="20" ry="13" fill="#5e241c" filter="url(#blur7)"/>
          <ellipse cx="575" cy="395" rx="40" ry="7" fill="#6a2a22" filter="url(#blur3)"/>
          <path d="M465,540 L500,566" stroke="#b04a3c" stroke-width="14" filter="url(#blur3)"/>
        </g>

        <!-- dark front face -->
        <path d="M778,336 L640,472 L660,492 L687,462 L693,465 L710,470 L723,469 C720,490 712,520 707,535 C703,539 698,540 693,539 C660,541 620,543 527,558 C533,520 545,500 567,483 L610,447 C630,432 640,410 633,397 C625,384 610,380 597,383 C570,386 545,390 520,397 L420,425 L367,447 L170,538 L172,488 L370,393 L420,375 C480,354 545,339 603,327 C650,322 710,318 772,318 Z" fill="url(#gFace)"/>

        <!-- small tab -->
        <path d="M687,428 L722,458 L725,465 L722,469 L710,470 L693,465 L687,460 L668,487 C664,493 662,495 655,495 C648,494 638,487 636,478 L640,468 L670,442 Z" fill="#f06a5a"/>
        <path d="M687,460 L670,445 L640,468 L660,483 L668,487 Z" fill="#f47a6a"/>

        <!-- lower fillet of the arm and arch edge -->
        <path d="M137,550 C145,556 155,556 165,550 L367,453 L420,435 L470,420 L527,407 L597,392 L560,386 L520,397 L420,425 L367,447 L170,538 L147,537 Z" fill="#b54e41"/>

        <!-- top surfaces -->
        <path d="M77,420 C100,415 130,405 183,387 L317,330 L430,285 L610,198 C600,205 598,215 598,227 C600,240 607,252 623,268 L373,348 L157,442 L123,453 Z" fill="#8fe680"/>
        <path d="M623,268 C640,280 653,290 665,295 C680,302 690,304 703,307 C725,312 750,313 770,313 L772,318 C740,317 710,318 687,320 C650,322 625,325 603,327 C570,333 545,339 520,345 C480,354 450,363 420,375 L370,393 L170,488 L123,453 L157,442 L373,348 Z" fill="#f87060"/>
        <path d="M605,262 L625,267" stroke="#f4c48a" stroke-width="2"/>

        <!-- upper fillet -->
        <path d="M772,318 C740,317 710,318 687,320 C650,322 625,325 603,327 C570,333 545,339 520,345 C480,354 450,363 420,375 L370,393 L170,488 L177,505 L375,410 L420,393 C450,384 475,378 503,372 C530,365 560,360 587,355 C620,347 655,341 687,338 C720,335 750,335 778,335 L782,326 Z" fill="#bd5446"/>
        <g clip-path="url(#clipBand)">
          <path d="M782,320 C720,321 650,327 600,336 C540,347 470,360 420,381 L372,399 L170,493" stroke="#ff8a7a" stroke-width="13" fill="none" filter="url(#blur3)"/>
        </g>
        <path d="M770,313 C778,316 783,322 782,330 C782,336 780,338 778,338 L770,335 Z" fill="#e86656"/>

        <!-- left end of the arm -->
        <path d="M77,420 L123,453 L110,473 L67,437 C66,432 68,424 77,420 Z" fill="url(#gEndGreen)"/>
        <path d="M67,437 L110,473 L103,523 L75,503 C68,498 64,492 63,485 C60,470 62,450 67,437 Z" fill="#4f8048"/>
        <path d="M123,453 L170,488 L153,503 L110,473 Z" fill="url(#gEndRed)"/>
        <path d="M110,473 L153,503 L147,537 L137,550 L103,523 Z" fill="#a84b3e"/>
        <path d="M153,503 C158,497 165,491 170,488 C175,491 178,497 177,505 L175,538 L165,550 C155,556 145,556 137,550 L147,537 Z" fill="url(#gCorner)"/>

        <!-- slot -->
        <path d="M165,412 L320,352 C330,346 345,342 353,343 C365,345 378,352 380,360 C381,366 376,370 367,373 L207,448 C200,451 180,451 167,447 C158,443 148,435 148,427 C148,420 156,415 165,412 Z" fill="#9a4237"/>
        <path d="M165,412 L320,352 C330,346 345,342 353,343 C362,344 372,349 375,353 L365,358 C360,353 345,351 338,353 L320,363 L167,423 C160,425 157,431 158,437 L153,437 C148,430 146,420 165,412 Z" fill="#ef6c5c"/>
        <path d="M367,350 C376,352 381,358 380,362 C380,367 375,371 367,373 C369,368 368,362 365,358 Z" fill="#85d678"/>
        <path d="M207,448 L367,373" stroke="#a8cf80" stroke-width="2"/>

        <!-- top right scoop -->
        <path d="M610,198 C618,197 626,204 627,212 C627,225 622,240 625,268 L615,262 C607,254 600,240 598,227 C597,214 603,204 610,198 Z" fill="#ef6c5c"/>
        <path d="M623,209 C612,213 604,220 604,230 C606,245 615,258 624,267 C621,248 622,225 623,209 Z" fill="#b85244"/>

        <!-- edges -->
        <g class="edges">
          <path d="M80,420 C110,413 140,404 183,389 L317,332 L430,287 L617,200"/>
          <path d="M80,420 L123,453 L170,488 C175,491 176,495 175,497 L175,538"/>
          <path d="M170,488 L370,393 L420,375 C450,363 480,354 520,345 C545,339 570,333 603,327 C625,325 650,322 687,320 C710,318 740,317 772,318 C778,320 781,326 780,335"/>
          <path d="M177,505 L375,410 L420,393 C470,378 530,365 587,355 C620,347 655,341 687,338 C720,335 750,335 778,335"/>
          <path d="M175,538 L367,447 L420,425 L520,397 C545,390 570,386 597,382 C610,380 625,384 633,397 C640,410 630,432 610,447 L567,483 C545,500 533,520 525,558"/>
          <path d="M370,393 L375,410 L365,453"/>
          <path d="M70,423 L67,437 L110,473 L153,503 L177,505 M67,437 C62,450 60,470 63,485 L67,495 L103,522 L135,542 L147,537 L153,503 M110,473 L103,522 M147,537 L175,538"/>
          <path d="M165,412 L320,352 C330,346 345,342 353,343 C365,345 378,352 380,360 C381,366 376,370 367,373"/>
          <path d="M153,437 C148,430 148,420 165,412 M167,423 L320,363 L338,353 C345,351 360,353 365,358 L367,372 M167,423 C161,425 158,431 158,437"/>
          <path d="M165,412 L167,423 L163,440 M320,352 L320,363 L315,393 M338,345 L338,353 L333,385"/>
          <path d="M598,227 C600,240 607,252 624,268 M617,200 C626,204 628,212 627,222 L624,268 M623,209 C612,213 604,220 604,230 C606,245 615,258 622,266 M598,227 C597,214 603,204 617,200"/>
          <path d="M555,400 L585,417 L612,447 M585,417 C598,414 604,408 602,403 M585,417 L553,440 C535,455 520,470 513,483 C503,497 495,510 492,520 L485,555"/>
          <path d="M472,420 C458,450 445,485 438,517"/>
          <path d="M640,468 L667,487 M640,477 L642,483 L660,483 L667,487 M687,460 L670,445 M693,455 L687,460 M693,455 L722,460 M713,460 L713,469 M678,439 L693,455 M710,470 L693,539"/>
        </g>
        <path d="M623,268 C640,280 665,296 703,307 C725,312 750,313 770,313" fill="none" stroke="#c8d890" stroke-width="1"/>
        <path d="M623,268 C640,280 665,296 703,307" fill="none" stroke="#2c2c20" stroke-width="0.700" stroke-dasharray="3 2"/>

        <!-- logo and wcs -->
        <g class="logo">
          <path d="M68,768 L108,768" stroke="#e8d0a0" stroke-width="1"/>
          <path d="M108,747 L102,770" stroke="#e8d0a0" stroke-width="1.400"/>
          <circle cx="106" cy="753" r="3" fill="#2a9a60"/>
          <circle cx="68" cy="769" r="3.500" fill="#2a9a60"/>
          <path d="M39,702 L50,710" stroke="#3a4ac0" stroke-width="1"/>
          <text x="29" y="702" class="axis-z">Z</text>
          <path fill-rule="evenodd" fill="#f00808" filter="url(#brush)" d="M70,645 a55,57 0 1 0 0.100,0 Z M72,653 a47,49 0 1 1 -0.100,0 Z"/>
          <circle cx="69.500" cy="664" r="6" fill="#f00808"/>
          <path d="M50,671 C57,668 64,672 69,680 C78,674 86,669 97,668 C90,675 82,682 76,688 C79,694 82,700 84,703 L74,703 C71,698 68,692 66,688 C61,691 58,697 56,703 L50,703 C50,698 54,690 60,680 C56,676 53,674 50,671 Z" fill="#f00808"/>
          <path d="M68,688 L63,715" stroke="#2abf88" stroke-width="1.600"/>
          <ellipse cx="61" cy="718" rx="4" ry="2" fill="#ddd"/>
          <text x="35" y="720" class="logo-ug">UG</text>
          <text x="76" y="720" class="logo-cn">爱好者</text>
          <rect x="28" y="724" width="90" height="11" fill="#f00808"/>
          <text x="29" y="733" class="logo-url">WWW.UGSNX.COM</text>
          <path d="M40,737 L105,739" stroke="#f00808" stroke-width="3"/>
        </g>
      </svg>

      <section class="dialog">
        <div class="title">
          <svg width="14" height="14" viewBox="0 0 14 14" class="pin"><path d="M2 2l6 1-2 2 5 5-1 1-5-5-2 2z" fill="#fff"/></svg>
          <span class="title-text">拔模分析</span>
          <svg width="14" height="14" viewBox="0 0 14 14" class="close"><path d="M2 2l10 10M12 2L2 12" stroke="#fff" stroke-width="3.200"/></svg>
        </div>

        <div class="body">
          <div v-for="f in fields" :key="f.label" class="field">
            <span>{{ f.label }}</span>
            <span class="num-input"><span>{{ f.value }}</span></span>
          </div>
          <div class="field on divided">
            <span>小平面质量</span>
            <span class="select"><b>法向</b><i class="combo-arrow"></i></span>
          </div>

          <div class="tone">
            <div class="tone-left">
              <div class="slider"><i class="thumb t0"></i></div>
              <div class="scale"><span class="zero">0</span><span class="name">透明度</span><span>100</span></div>
            </div>
            <div class="swatch green"></div>
          </div>

          <div class="head-row"><span class="head">+ 限制</span><label class="check"><i class="box"></i>显示等斜线</label></div>
          <div class="limit">
            <div class="limit-left">
              <div class="val pos">.2</div>
              <div class="slider"><i class="thumb t1"></i></div>
              <div class="scale nums pos-nums"><span>.0</span><span>5.0</span></div>
            </div>
            <button class="lock">
              <svg width="18" height="18" viewBox="0 0 20 20"><use href="#lockIcon"/></svg>
            </button>
          </div>

          <div class="tone">
            <div class="tone-left">
              <div class="slider"><i class="thumb t0"></i></div>
              <div class="scale"><span class="zero">0</span><span class="name">透明度</span><span>100</span></div>
            </div>
            <div class="swatch tan"></div>
          </div>

          <div class="head-row short"><span class="head">分型线</span><label class="check"><i class="box"></i>显示等斜线</label></div>

          <div class="tone">
            <div class="tone-left">
              <div class="slider"><i class="thumb t0"></i></div>
              <div class="scale"><span class="zero">0</span><span class="name">透明度</span><span>100</span></div>
            </div>
            <div class="swatch olive"></div>
          </div>

          <div class="head-row"><span class="head">- 限制</span><label class="check"><i class="box"></i>显示等斜线</label></div>
          <div class="limit">
            <div class="limit-left">
              <div class="val neg">-.2</div>
              <div class="slider"><i class="thumb t2"></i></div>
              <div class="scale nums neg-nums"><span>-5.0</span><span>.0</span></div>
            </div>
            <button class="lock">
              <svg width="18" height="18" viewBox="0 0 20 20"><use href="#lockIcon"/></svg>
            </button>
          </div>

          <div class="tone last">
            <div class="tone-left">
              <div class="slider"><i class="thumb t0"></i></div>
              <div class="scale"><span class="zero">0</span><span class="name">透明度</span><span>100</span></div>
            </div>
            <div class="swatch red"></div>
          </div>

          <button class="save">保存等斜线</button>
          <label class="auto"><i class="box ticked"><svg width="14" height="14" viewBox="0 0 14 14"><path d="M2 7l3.500 4L12 3" stroke="#123a78" stroke-width="2.600" fill="none"/></svg></i>自动连结</label>
        </div>

        <div class="actions">
          <button class="act">确定</button>
          <button class="act apply">应用</button>
          <button class="act">取消</button>
        </div>
        <div class="foot"></div>
      </section>
    </main>
  </div>
</template>

<style>
html, body { margin: 0; background: #212328; overflow: hidden; }
</style>

<style scoped>
.page {
  width: 1209px;
  height: 770px;
  display: flex;
  flex-direction: column;
  overflow: hidden;
  font-family: "Noto Sans CJK SC", "Liberation Sans", sans-serif;
  font-size: 12px;
  color: #222;
}
.defs { position: absolute; width: 0; height: 0; }

.chrome { height: 150px; flex: none; background: #dcdcdc; padding-top: 3px; box-sizing: border-box; }
.tool-row {
  display: flex;
  align-items: center;
  white-space: nowrap;
  overflow: hidden;
  height: 26px;
  background: #d9d9d9;
  border-top: 1px solid #ececec;
  box-sizing: border-box;
}
.row-2 { border-bottom: 1px solid #a8a8a8; }
.row-3 { height: 28px; margin-top: 2px; border-bottom: 1px solid #efefef; background: #dadada; }

.tool { flex: none; width: 22px; height: 22px; display: flex; align-items: center; justify-content: center; box-sizing: border-box; }
.tool.active { background: #fff; border: 1px solid #555; border-radius: 3px; }
.sep { flex: none; width: 2px; height: 22px; background: linear-gradient(90deg, #b2b2b2 50%, #f4f4f4 50%); }
.caret { flex: none; width: 8px; height: 8px; position: relative; }
.caret::after { content: ""; position: absolute; left: 1px; top: 3px; border: 3px solid transparent; border-top: 4px solid #111; border-bottom: 0; }
.grip { flex: none; width: 4px; height: 20px; background: repeating-linear-gradient(180deg, #fff 0 2px, #999 2px 3px, transparent 3px 5px); }

.combo {
  flex: none;
  width: 150px;
  height: 19px;
  display: flex;
  align-items: center;
  background: #fff;
  border: 1px solid #555;
  border-radius: 3px;
  box-sizing: border-box;
}
.combo b { flex: 1; padding-left: 2px; font-weight: 400; font-size: 13px; line-height: 17px; color: #111; }
.combo-off { width: 76px; justify-content: flex-end; background: #d4d4d4; border-color: #d4d4d4; }
.combo-arrow { flex: none; width: 16px; height: 100%; background: linear-gradient(180deg, #a8c8ec, #3f7fc8); position: relative; border-radius: 2px; border: 1px solid #486a92; box-sizing: border-box; }
.combo-arrow::after { content: ""; position: absolute; left: 2px; top: 4px; border: 5px solid transparent; border-top: 6px solid #0a1a3a; border-bottom: 0; }
.combo-arrow.off { background: linear-gradient(180deg, #eee, #ccc); border-color: #aaa; }
.combo-arrow.off::after { border-top-color: #999; }

.status { height: 23px; display: flex; background: #d9d9d9; font-weight: 700; font-size: 13px; line-height: 21px; color: #111; }
.status-left { width: 608px; flex: none; text-indent: -7px; border-right: 1px solid #f4f4f4; box-sizing: border-box; overflow: hidden; white-space: nowrap; }
.status-right { padding-left: 2px; }
.strip { height: 15px; background: linear-gradient(180deg, #a8a8a8 0, #c4c4c4 3px, #ececec 6px, #e4e4e4 11px, #b4b4b4 12px, #e0e0e0 13px, #777 15px); }

.viewport { flex: 1; position: relative; background: #212328; }
.model { display: block; }
.edges path { fill: none; stroke: #2a1612; stroke-width: 0.8; }
.axis-z { font: 700 10px "Liberation Sans", sans-serif; fill: #3a4ac0; }
.logo-ug { font: 700 19px "Liberation Sans", sans-serif; fill: #212328; stroke: #f00808; stroke-width: 1.2; }
.logo-cn { font: 700 14px "Noto Sans CJK SC", sans-serif; fill: #f01818; }
.logo-url { font: 700 9.700px "Liberation Sans", sans-serif; fill: #fff; }

.dialog {
  position: absolute;
  left: 805px;
  top: -20px;
  width: 287px;
  height: 615px;
  display: flex;
  flex-direction: column;
  background: #ebebeb;
  border-radius: 8px;
  overflow: hidden;
  box-shadow: 0 0 0 1px #111;
}
.title {
  flex: none;
  height: 22px;
  display: flex;
  align-items: center;
  background: linear-gradient(180deg, #666 0, #333 4px, #111 9px, #111 100%);
  color: #fff;
  box-sizing: border-box;
}
.pin { margin: 0 4px; }
.title-text { flex: 1; padding-left: 5px; border-left: 1px solid #888; border-right: 1px solid #888; font-size: 15px; font-weight: 700; letter-spacing: 2px; line-height: 22px; }
.close { margin: 0 4px 0 3px; }

.body { flex: 1; padding: 7px 10px 0 10px; display: flex; flex-direction: column; }
.field { height: 20px; display: flex; align-items: center; justify-content: space-between; color: #a8a8a8; line-height: 18px; }
.field.on { color: #111; }
.field.divided { height: 24px; padding-bottom: 2px; border-bottom: 1px solid #c8c8c8; box-shadow: 0 1px 0 #fff; box-sizing: border-box; }
.num-input {
  width: 57px;
  height: 18px;
  display: block;
  overflow: hidden;
  background: #d2d2d2;
  border: 1px solid #c0c0c0;
  border-left: 2px solid #b2b2b2;
  border-radius: 3px;
  box-sizing: border-box;
  color: #a8a8a8;
  font: 11px/16px "DejaVu Sans", sans-serif;
  white-space: nowrap;
  padding-left: 13px;
}
.select { width: 61px; height: 19px; display: flex; align-items: center; background: #fff; border: 1px solid #555; border-radius: 3px; box-sizing: border-box; }
.select b { flex: 1; font-weight: 400; padding-left: 3px; color: #111; line-height: 17px; }

.tone { height: 48px; display: flex; border-bottom: 1px solid #c8c8c8; box-shadow: 0 1px 0 #fff; box-sizing: border-box; padding-top: 3px; }
.tone.last { height: 49px; }
.tone-left { width: 152px; flex: none; }
.slider { position: relative; height: 2px; width: 133px; margin: 12px 0 0 8px; background: #a8a8a8; border-bottom: 1px solid #fff; }
.thumb {
  position: absolute;
  top: -9px;
  width: 10px;
  height: 18px;
  border-radius: 50% 50% 4px 4px / 60% 60% 4px 4px;
  border: 1px solid #3a6a92;
  background: linear-gradient(180deg, #f0f6fa 0 35%, #86cdf0 55%, #c4e8f8 100%);
  box-sizing: border-box;
}
.t0 { left: 0; }
.t1 { left: 5px; }
.t2 { left: 118px; }
.scale { display: flex; justify-content: space-between; align-items: center; line-height: 14px; margin-top: 12px; font-size: 11px; width: 149px; font-family: "Liberation Sans", "Noto Sans CJK SC", sans-serif; }
.scale .zero { width: 20px; }
.scale .name { flex: 1; font-size: 12px; font-family: "Noto Sans CJK SC", sans-serif; }
.swatch { flex: none; width: 115px; height: 32px; border: 1px solid #111; box-sizing: border-box; }
.green { background: #6cb264; }
.tan { background: #c69868; }
.olive { background: #918c62; }
.red { background: #d5574c; }

.head-row { height: 25px; display: flex; justify-content: space-between; align-items: center; color: #222; line-height: 16px; padding-top: 1px; box-sizing: border-box; }
.head-row.short { height: 26px; border-bottom: 1px solid #c8c8c8; box-shadow: 0 1px 0 #fff; }
.head { margin-bottom: 3px; }
.check { display: flex; align-items: center; gap: 2px; width: 79px; margin-right: 1px; }
.box { flex: none; width: 16px; height: 16px; border: 1px solid #666; border-radius: 3px; background: linear-gradient(180deg, #f4f4f4, #b8b8b8); box-sizing: border-box; display: block; }
.box.ticked { background: linear-gradient(180deg, #d0e8f8, #70aee0); border-color: #3a6a92; display: flex; align-items: center; justify-content: center; }

.limit { height: 57px; display: flex; border-bottom: 1px solid #c8c8c8; box-shadow: 0 1px 0 #fff; box-sizing: border-box; }
.limit-left { width: 153px; flex: none; }
.val { font: 11px/12px "DejaVu Sans", sans-serif; height: 12px; margin-top: 1px; }
.val.pos { padding-left: 12px; }
.val.neg { padding-left: 122px; }
.limit .slider { margin-top: 14px; }
.scale.nums { margin-top: 9px; font-family: "DejaVu Sans", sans-serif; }
.pos-nums { padding-left: 5px; width: 143px; box-sizing: border-box; }
.neg-nums { padding-left: 5px; box-sizing: border-box; }
.lock {
  flex: none;
  width: 113px;
  height: 30px;
  margin-top: 9px;
  padding: 4px 0 0;
  background: linear-gradient(180deg, #f4d8c0 0, #fbcaa0 25%, #ff9c50 45%, #ff8a30 75%, #fdb880 100%);
  border: 1px solid #8a6a4a;
  border-radius: 4px;
}

.save {
  height: 23px;
  margin: 3px 0 0 1px;
  width: 265px;
  flex: none;
  padding: 0;
  font: 12px/20px "Noto Sans CJK SC", sans-serif;
  color: #222;
  background: linear-gradient(180deg, #f6f6f6 0, #dadada 55%, #b8b8b8 100%);
  border: 1px solid #666;
  border-radius: 4px;
}
.auto { display: flex; align-items: center; gap: 3px; margin-top: 4px; line-height: 16px; color: #222; }

.actions { flex: none; height: 35px; margin: 0 7px; border-top: 1px solid #c8c8c8; box-shadow: inset 0 1px 0 #fff; display: flex; gap: 7px; justify-content: flex-end; padding: 5px 10px 0 0; box-sizing: border-box; }
.act { width: 52px; height: 19px; padding: 0; font: 12px/16px "Noto Sans CJK SC", sans-serif; color: #222; background: linear-gradient(180deg, #f6f6f6, #d0d0d0); border: 1px solid #666; border-radius: 4px; }
.apply { background: linear-gradient(180deg, #d4f0cc 0, #b8e4ac 45%, #6fd060 100%); border-color: #4a7a4a; }
.foot { flex: none; height: 9px; background: linear-gradient(180deg, #111, #333); }
</style>
